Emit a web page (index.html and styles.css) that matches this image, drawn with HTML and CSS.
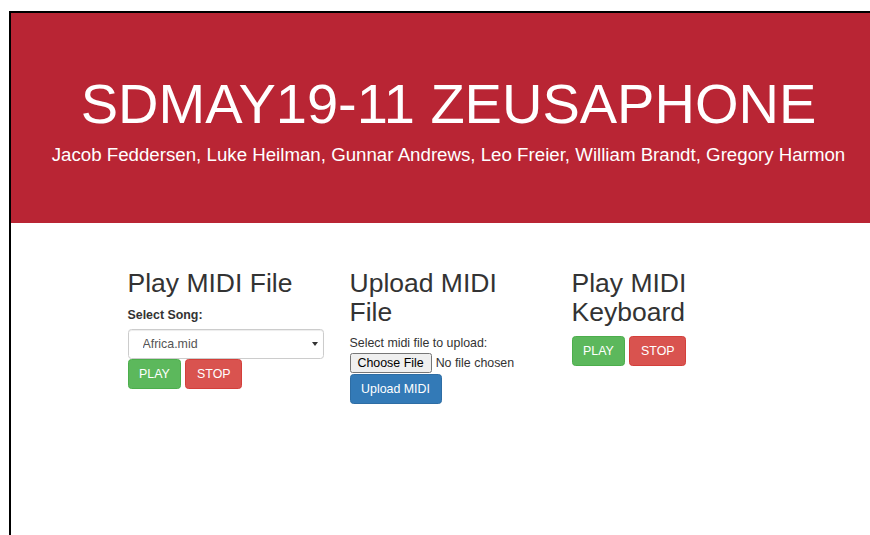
FILE: index.html
```html
<!DOCTYPE html>
<html lang="en">
<head>
<meta charset="utf-8">
<title>SDMAY19-11 Zeusaphone</title>
<link rel="stylesheet" href="styles.css">
</head>
<body>
<div class="frame">
  <header class="jumbotron">
    <h1 class="title">SDMAY19-11 ZEUSAPHONE</h1>
    <p class="team">Jacob Feddersen, Luke Heilman, Gunnar Andrews, Leo Freier, William Brandt, Gregory Harmon</p>
  </header>

  <main class="panels">
    <section class="panel">
      <h2 class="panel-title">Play MIDI File</h2>
      <label class="field-label" for="song">Select Song:</label>
      <select id="song" class="form-control">
        <option>Africa.mid</option>
      </select>
      <div class="btn-row">
        <button class="btn btn-success" type="button">PLAY</button>
        <button class="btn btn-danger" type="button">STOP</button>
      </div>
    </section>

    <section class="panel">
      <h2 class="panel-title">Upload MIDI File</h2>
      <form class="upload-form">
        <div class="upload-hint">Select midi file to upload:</div>
        <input class="file-input" type="file" name="midi">
        <button class="btn btn-primary" type="button">Upload MIDI</button>
      </form>
    </section>

    <section class="panel">
      <h2 class="panel-title">Play MIDI Keyboard</h2>
      <div class="btn-row">
        <button class="btn btn-success" type="button">PLAY</button>
        <button class="btn btn-danger" type="button">STOP</button>
      </div>
    </section>
  </main>
</div>
</body>
</html>
```
FILE: styles.css
```css
html,
body {
  margin: 0;
  padding: 0;
  overflow: hidden;
  background: #fff;
}

body {
  font-family: "Liberation Sans", Arial, sans-serif;
  font-size: 12.4px;
  line-height: 1.42857;
  color: #333;
  padding: 11px 0 0 9px;
}

.frame {
  width: 875px;
  height: 524px;
  border-top: 2px solid #000;
  border-left: 2px solid #000;
  background: #fff;
}

/* red banner */
.jumbotron {
  background: #b92534;
  color: #fff;
  text-align: center;
  padding: 42px 0;
}

.title {
  margin: 17.6px 0 8.8px;
  font-size: 56px;
  font-weight: 400;
  line-height: 61px;
}

.team {
  margin: 0 0 12px;
  font-size: 18.7px;
  line-height: 26.4px;
}

/* three control panels */
.panels {
  display: flex;
  justify-content: center;
  padding: 28.6px 2px 0 0;
}

.panel {
  width: 222px;
  box-sizing: border-box;
  padding: 0 13px;
}

.panel-title {
  margin: 17.6px 0 8.8px;
  font-size: 26.5px;
  font-weight: 400;
  line-height: 29px;
  color: #333;
}

.field-label {
  display: block;
  margin-bottom: 4.4px;
  font-weight: 700;
}

.form-control {
  display: block;
  width: 100%;
  height: 30px;
  box-sizing: border-box;
  padding: 0 10px 0 14px;
  font-family: inherit;
  font-size: 12.4px;
  color: #555;
  background-color: #fff;
  background-image: url("data:image/svg+xml;utf8,<svg xmlns='http://www.w3.org/2000/svg' width='6' height='4'><path d='M0 0h6L3 4z' fill='%23333'/></svg>");
  background-repeat: no-repeat;
  background-position: right 5px center;
  border: 1px solid #ccc;
  border-radius: 3.5px;
  box-shadow: inset 0 1px 1px rgba(0, 0, 0, 0.075);
  appearance: none;
  -webkit-appearance: none;
}

.btn-row {
  display: flex;
  gap: 4px;
}

.btn {
  display: inline-block;
  height: 30px;
  box-sizing: border-box;
  padding: 0 10.6px;
  font-family: inherit;
  font-size: 12.4px;
  line-height: 28px;
  color: #fff;
  border: 1px solid transparent;
  border-radius: 3.5px;
  cursor: pointer;
}

.btn-success {
  background: #5cb85c;
  border-color: #4cae4c;
}

.btn-danger {
  background: #d9534f;
  border-color: #d43f3a;
}

.btn-primary {
  background: #337ab7;
  border-color: #2e6da4;
}

.upload-form {
  margin: 0;
}

.upload-hint {
  line-height: 15px;
}

.file-input {
  display: block;
  margin: 2px 0 1px;
  font-family: inherit;
  font-size: 12.4px;
  color: #333;
}
```
